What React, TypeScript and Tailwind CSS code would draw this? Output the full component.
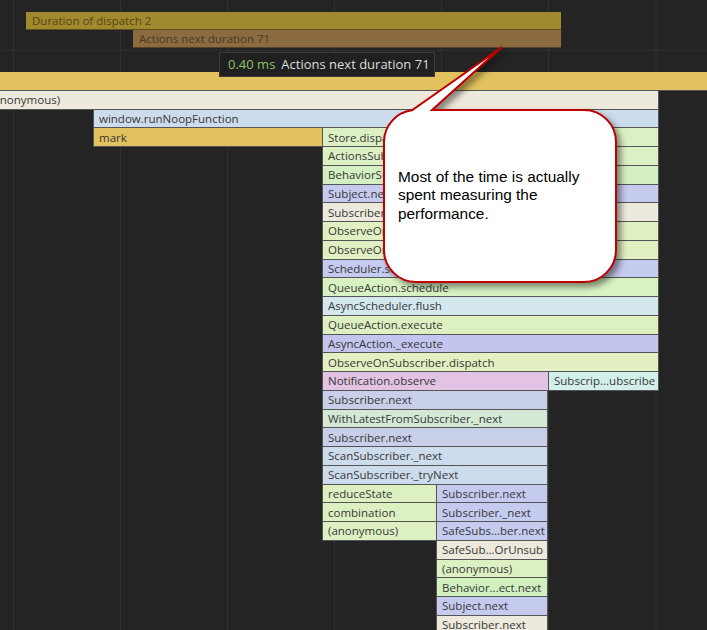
import type { ReactNode } from "react";

type Bar = { from: number; to: number; label?: string; color: string };

const ROW_H = 18.75;

const rows: Bar[][] = [
  [{ from: -10, to: 720, color: "bg-[#e1c25f]" }],
  [{ from: -16, to: 659, label: "(anonymous)", color: "bg-[#ede9dc]" }],
  [{ from: 93, to: 659, label: "window.runNoopFunction", color: "bg-[#cddced]" }],
  [
    { from: 93, to: 322, label: "mark", color: "bg-[#e1c25f]" },
    { from: 322, to: 659, label: "Store.dispatch", color: "bg-[#dcf0c4]" },
  ],
  [{ from: 322, to: 659, label: "ActionsSubject.next", color: "bg-[#dcf0c4]" }],
  [{ from: 322, to: 659, label: "BehaviorSubject.next", color: "bg-[#d4f0c2]" }],
  [{ from: 322, to: 659, label: "Subject.next", color: "bg-[#c5cbee]" }],
  [{ from: 322, to: 659, label: "Subscriber.next", color: "bg-[#ede9dc]" }],
  [{ from: 322, to: 659, label: "ObserveOnSubscriber.next", color: "bg-[#e1f0c2]" }],
  [{ from: 322, to: 659, label: "ObserveOnSubscriber.scheduleMessage", color: "bg-[#e1f0c2]" }],
  [{ from: 322, to: 659, label: "Scheduler.schedule", color: "bg-[#c5cbee]" }],
  [{ from: 322, to: 659, label: "QueueAction.schedule", color: "bg-[#d9f2c2]" }],
  [{ from: 322, to: 659, label: "AsyncScheduler.flush", color: "bg-[#d3e7ec]" }],
  [{ from: 322, to: 659, label: "QueueAction.execute", color: "bg-[#dcf0c2]" }],
  [{ from: 322, to: 659, label: "AsyncAction._execute", color: "bg-[#c3c5ef]" }],
  [{ from: 322, to: 659, label: "ObserveOnSubscriber.dispatch", color: "bg-[#e2f0c2]" }],
  [
    { from: 322, to: 548, label: "Notification.observe", color: "bg-[#e3c3e3]" },
    { from: 548, to: 659, label: "Subscrip...ubscribe", color: "bg-[#d3efe9]" },
  ],
  [{ from: 322, to: 548, label: "Subscriber.next", color: "bg-[#c8cfe8]" }],
  [{ from: 322, to: 548, label: "WithLatestFromSubscriber._next", color: "bg-[#d3e9d6]" }],
  [{ from: 322, to: 548, label: "Subscriber.next", color: "bg-[#c8cfe8]" }],
  [{ from: 322, to: 548, label: "ScanSubscriber._next", color: "bg-[#cddced]" }],
  [{ from: 322, to: 548, label: "ScanSubscriber._tryNext", color: "bg-[#cddced]" }],
  [
    { from: 322, to: 436, label: "reduceState", color: "bg-[#ddf0c2]" },
    { from: 436, to: 548, label: "Subscriber.next", color: "bg-[#c5cbee]" },
  ],
  [
    { from: 322, to: 436, label: "combination", color: "bg-[#ddf0c2]" },
    { from: 436, to: 548, label: "Subscriber._next", color: "bg-[#c5cbee]" },
  ],
  [
    { from: 322, to: 436, label: "(anonymous)", color: "bg-[#ddf0c2]" },
    { from: 436, to: 548, label: "SafeSubs...ber.next", color: "bg-[#c5cbee]" },
  ],
  [{ from: 436, to: 548, label: "SafeSub...OrUnsub", color: "bg-[#ede9dc]" }],
  [{ from: 436, to: 548, label: "(anonymous)", color: "bg-[#ddf0c2]" }],
  [{ from: 436, to: 548, label: "Behavior...ect.next", color: "bg-[#d1f0c0]" }],
  [{ from: 436, to: 548, label: "Subject.next", color: "bg-[#c5cbee]" }],
  [{ from: 436, to: 548, label: "Subscriber.next", color: "bg-[#ede9dc]" }],
];

const gridX = [13.5, 120.5, 227.5, 334.5, 441.5, 548.5, 656];

function FlameRow({ bars }: { bars: Bar[] }) {
  const items: ReactNode[] = [];
  let cursor = 0;
  bars.forEach((bar, i) => {
    if (bar.from > cursor) {
      items.push(<div key={`gap-${i}`} className="shrink-0" style={{ width: bar.from - cursor }} />);
    }
    const next = bars[i + 1];
    const joined = next && next.from === bar.to;
    items.push(
      <div
        key={i}
        className={`flex shrink-0 items-center overflow-hidden whitespace-nowrap border-b border-l border-[#555] pl-[5px] text-[11.5px] text-[#383838] ${
          joined ? "" : "border-r"
        } ${bar.color}`}
        style={{ width: bar.to - bar.from, marginLeft: bar.from < 0 && i === 0 ? bar.from : undefined }}
      >
        {bar.label}
      </div>,
    );
    cursor = bar.to;
  });

  return (
    <div className="flex" style={{ height: ROW_H }}>
      {items}
    </div>
  );
}

export default function App() {
  return (
    <div className="relative h-[630px] w-[707px] overflow-hidden bg-[#242424] font-['Open_Sans','Noto_Sans',sans-serif]">
      <svg className="absolute inset-0" width="707" height="630">
        {gridX.map((x) => (
          <line key={x} x1={x} y1={0} x2={x} y2={630} stroke="#303030" strokeWidth={1} />
        ))}
        <line x1={0} y1={50.5} x2={707} y2={50.5} stroke="#2e2e2e" strokeWidth={1} />
      </svg>

      {/* timings track */}
      <div className="relative h-[72px] pt-[12px]">
        <div className="flex h-[18px]">
          <div className="w-[26px] shrink-0" />
          <div className="flex w-[535px] items-center border-b border-[#5e5020] bg-[#a08a2d] pl-[6px] text-[11.5px] text-[#54461a]">
            Duration of dispatch 2
          </div>
        </div>
        <div className="flex h-[18px]">
          <div className="w-[133px] shrink-0" />
          <div className="flex w-[428px] items-center border-b border-[#54422a] bg-[#8b6b3f] pl-[6px] text-[11.5px] text-[#4a3a24]">
            Actions next duration 71
          </div>
        </div>
      </div>

      {/* main track */}
      <div className="relative">
        {rows.map((bars, i) => (
          <FlameRow key={i} bars={bars} />
        ))}
      </div>

      {/* hover tooltip */}
      <div className="absolute left-[219px] top-[52px] flex h-[25px] w-[216px] items-center gap-[6px] whitespace-nowrap border border-[#3a3a3a] bg-[#202020] pl-[8px] text-[13px]">
        <span className="text-[#8cc265]">0.40 ms</span>
        <span className="text-[#dcdcdc]">Actions next duration 71</span>
      </div>

      {/* callout */}
      <svg
        className="pointer-events-none absolute inset-0 drop-shadow-[4px_4px_3px_rgba(0,0,0,0.45)]"
        width="707"
        height="630"
      >
        <path
          d="M 432 110 H 584 A 32 32 0 0 1 616 142 V 250 A 32 32 0 0 1 584 282 H 416 A 32 32 0 0 1 384 250 V 142 A 32 32 0 0 1 412 110.3 L 502 47 Z"
          fill="#ffffff"
          stroke="#c00000"
          strokeWidth={2}
          strokeLinejoin="miter"
        />
      </svg>
      <div className="absolute left-[398px] top-[168px] font-['Liberation_Sans',Arial,sans-serif] text-[15.4px] leading-[18.3px] text-black">
        Most of the time is actually
        <br />
        spent measuring the
        <br />
        performance.
      </div>
    </div>
  );
}
